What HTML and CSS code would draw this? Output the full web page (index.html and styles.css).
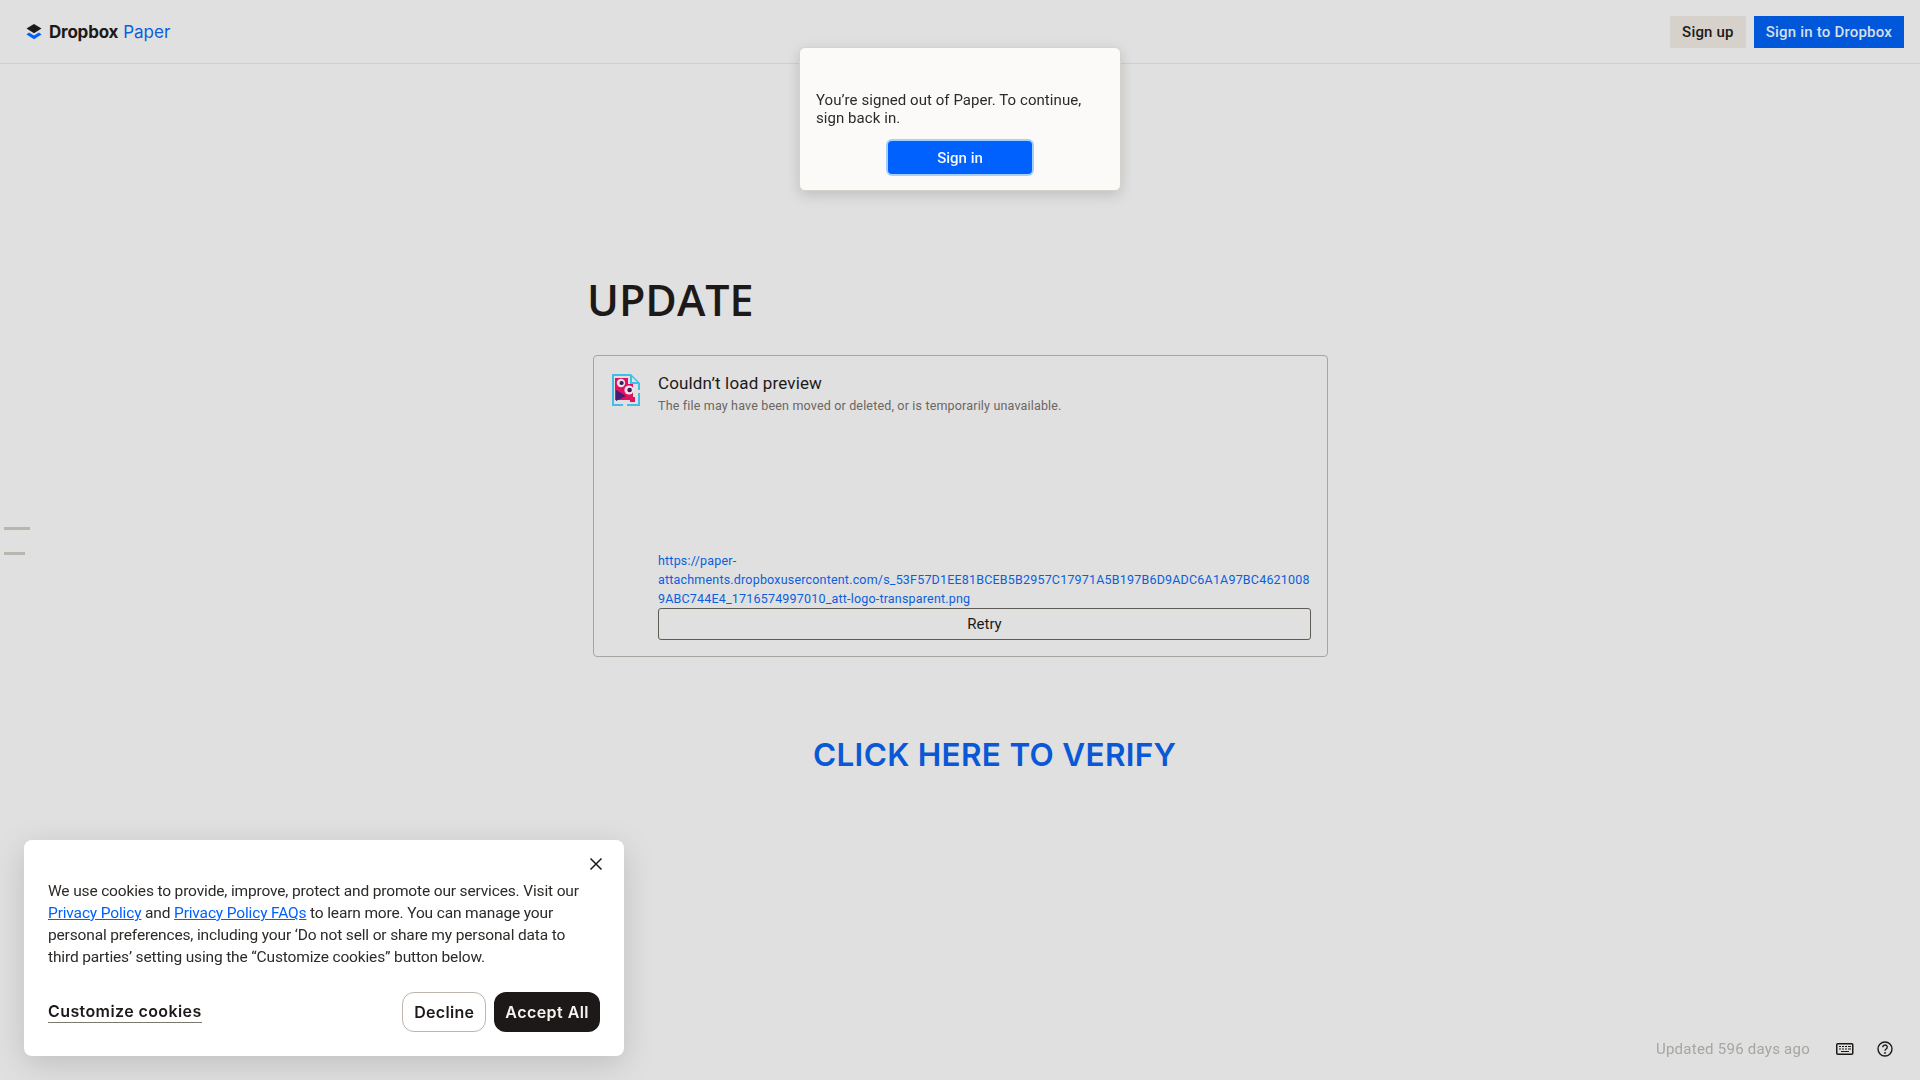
FILE: index.html
```html
<!DOCTYPE html>
<html lang="en">
<head>
    <meta charset="UTF-8">
    <meta name="viewport" content="width=device-width, initial-scale=1.0">
    <title>UPDATE - Dropbox Paper</title>
    <link rel="stylesheet" href="styles.css">
</head>
<body>
    <header class="topbar">
        <a class="brand" href="#">
            <svg class="brand-icon" width="16" height="16" viewBox="0 0 16 16">
                <path d="M8 0 15.5 4.6 8 9.2.5 4.6z" fill="#1e1919"/>
                <path d="M3 8.6 8 11.4 13 8.6 15.5 10.6 8 15.2.5 10.6z" fill="#0061fe"/>
            </svg>
            <span class="brand-name">Dropbox</span>
            <span class="brand-product">Paper</span>
        </a>
        <nav class="topbar-actions">
            <a class="btn btn-muted" href="#">Sign up</a>
            <a class="btn btn-blue" href="#">Sign in to Dropbox</a>
        </nav>
    </header>

    <main class="doc">
        <h1 class="doc-title">UPDATE</h1>

        <section class="embed">
            <svg class="embed-icon" width="30" height="34" viewBox="0 0 30 34">
                <path d="M1 1h19l9 9v7h-2v-6h-8V3H3v28h9v2H1z" fill="#3fbfe8"/>
                <path d="M16 31h11V20h2v13H16z" fill="#3fbfe8"/>
                <path d="M21 4l5 5h-5z" fill="#cfe6f2"/>
                <path d="M4 5h13v6h5v16H4z" fill="#e0115f"/>
                <path d="M5 17l10 6-10 5z" fill="#4a1a7a"/>
                <path d="M19 29h5v-5h-2v3h-3z" fill="#e0115f"/>
                <circle cx="10" cy="10" r="4.2" fill="#f1e3ea"/>
                <circle cx="10.6" cy="10" r="2.1" fill="#3a1a5a"/>
                <circle cx="18" cy="17" r="4.6" fill="#f1e3ea"/>
                <circle cx="18.6" cy="17" r="2.3" fill="#3a1a5a"/>
            </svg>
            <div class="embed-body">
                <h2 class="embed-title">Couldn’t load preview</h2>
                <p class="embed-note">The file may have been moved or deleted, or is temporarily unavailable.</p>
                <a class="embed-link" href="#">https://paper-attachments.dropboxusercontent.com/s_53F57D1EE81BCEB5B2957C17971A5B197B6D9ADC6A1A97BC46210089ABC744E4_1716574997010_att-logo-transparent.png</a>
                <button class="retry">Retry</button>
            </div>
        </section>

        <p class="verify"><a href="#">CLICK HERE TO VERIFY</a></p>
    </main>

    <div class="outline">
        <span class="outline-long"></span>
        <span class="outline-short"></span>
    </div>

    <div class="signed-out">
        <p>You’re signed out of Paper. To continue, sign back in.</p>
        <button class="signin">Sign in</button>
    </div>

    <aside class="cookies">
        <button class="cookies-close" aria-label="Close">
            <svg width="14" height="14" viewBox="0 0 14 14"><path d="M1.5 1.5l11 11M12.5 1.5l-11 11" stroke="#1e1919" stroke-width="1.5" fill="none"/></svg>
        </button>
        <p class="cookies-text">We use cookies to provide, improve, protect and promote our services. Visit our <a href="#">Privacy Policy</a> and <a href="#">Privacy Policy FAQs</a> to learn more. You can manage your personal preferences, including your ‘Do not sell or share my personal data to third parties’ setting using the “Customize cookies” button below.</p>
        <div class="cookies-actions">
            <a class="customize" href="#">Customize cookies</a>
            <div class="cookies-buttons">
                <button class="pill pill-light">Decline</button>
                <button class="pill pill-dark">Accept All</button>
            </div>
        </div>
    </aside>

    <footer class="status">
        <span class="status-text">Updated 596 days ago</span>
        <svg class="status-icon" width="18" height="12" viewBox="0 0 18 12">
            <rect x=".75" y=".75" width="16" height="10.5" rx="1" fill="none" stroke="#1e1919" stroke-width="1.5"/>
            <path d="M3 3.5h2M6 3.5h2M9 3.5h2M12 3.5h3M3 6h2M6 6h2M9 6h2M12 6h3M5 8.5h8" stroke="#1e1919" stroke-width="1.2"/>
        </svg>
        <svg class="status-icon" width="16" height="16" viewBox="0 0 16 16">
            <circle cx="8" cy="8" r="7" fill="none" stroke="#1e1919" stroke-width="1.4"/>
            <path d="M5.8 6.2a2.2 2.2 0 1 1 3.4 1.8c-.8.5-1.2.9-1.2 1.8" fill="none" stroke="#1e1919" stroke-width="1.4"/>
            <circle cx="8" cy="12" r=".9" fill="#1e1919"/>
        </svg>
    </footer>
</body>
</html>
```

FILE: styles.css
```css
* {
    box-sizing: border-box;
}
html, body {
    height: 100%;
}
body {
    margin: 0;
    background: #e0e0e0;
    color: #1e1919;
    font-family: "Roboto", "Liberation Sans", sans-serif;
    overflow: hidden;
}
a {
    text-decoration: none;
}
button {
    font-family: inherit;
    cursor: pointer;
}

/* top bar */
.topbar {
    height: 64px;
    padding: 16px 16px 0 26px;
    display: flex;
    justify-content: space-between;
    border-bottom: 1px solid #cfcfcd;
}
.brand {
    display: flex;
    align-items: center;
    height: 32px;
    font-family: "Inter", sans-serif;
    font-size: 17px;
}
.brand-icon {
    margin-right: 7px;
}
.brand-name {
    color: #1e1919;
    font-weight: 700;
    letter-spacing: -0.2px;
    margin-right: 5px;
}
.brand-product {
    color: #0a5fdc;
}
.topbar-actions {
    display: flex;
    gap: 8px;
}
.btn {
    height: 32px;
    padding: 0 12px;
    display: flex;
    align-items: center;
    font-size: 15px;
    font-weight: 500;
    letter-spacing: 0.2px;
}
.btn-muted {
    background: #d6d1ca;
    color: #1e1919;
}
.btn-blue {
    background: #0057d9;
    color: #d7dfe9;
}

/* document */
.doc {
    width: 740px;
    margin-left: 590px;
}
.doc-title {
    margin: 0;
    padding-top: 206px;
    margin-left: -3px;
    font-family: "Open Sans", sans-serif;
    font-size: 43px;
    line-height: 60px;
    font-weight: 600;
    color: #1e1919;
}
.embed {
    width: 735px;
    height: 302px;
    margin: 25px 0 0 3px;
    padding: 16px 16px 15px 17px;
    display: flex;
    gap: 17px;
    border: 1px solid #a8a5a0;
    border-radius: 4px;
}
.embed-icon {
    flex: none;
    margin-top: 1px;
}
.embed-body {
    flex: 1;
    min-width: 0;
}
.embed-title {
    margin: 0;
    font-size: 17px;
    line-height: 22px;
    font-weight: 400;
    letter-spacing: 0.15px;
}
.embed-note {
    margin: 2px 0 0;
    height: 155px;
    font-size: 12.5px;
    line-height: 20px;
    letter-spacing: 0.17px;
    color: #6b6660;
}
.embed-link {
    display: block;
    font-size: 12.5px;
    line-height: 19px;
    letter-spacing: 0.19px;
    color: #0a5fdc;
    overflow-wrap: anywhere;
}
.retry {
    display: block;
    width: 100%;
    height: 32px;
    background: transparent;
    border: 1px solid #5f5b55;
    border-radius: 3px;
    font-size: 15px;
    color: #1e1919;
}
.verify {
    margin: 78px 0 0 223px;
    font-family: "Inter", sans-serif;
    font-size: 31.5px;
    line-height: 40px;
    font-weight: 600;
    letter-spacing: 0.3px;
}
.verify a {
    color: #0a58d6;
}

/* outline marks at the left edge */
.outline {
    position: fixed;
    left: 4px;
    top: 527px;
    display: flex;
    flex-direction: column;
    gap: 22px;
}
.outline span {
    display: block;
    height: 3px;
    background: #b9b6b0;
}
.outline-long {
    width: 26px;
}
.outline-short {
    width: 21px;
}

/* signed out popup */
.signed-out {
    position: fixed;
    left: 799px;
    top: 47px;
    width: 322px;
    height: 144px;
    padding: 43px 16px 0;
    background: #fbfaf8;
    border: 1px solid #d6d1ca;
    border-radius: 6px;
    box-shadow: 0 4px 14px rgba(0, 0, 0, 0.15);
}
.signed-out p {
    margin: 0;
    font-size: 15px;
    line-height: 18px;
    letter-spacing: 0.06px;
    color: #2d2a27;
}
.signin {
    display: block;
    width: 148px;
    height: 37px;
    margin: 12px auto 0;
    background: #0061fe;
    border: 2px solid #a3d0ff;
    border-radius: 6px;
    color: #f4f7fb;
    font-size: 15px;
    font-weight: 500;
}

/* cookie banner */
.cookies {
    position: fixed;
    left: 24px;
    top: 840px;
    width: 600px;
    height: 216px;
    padding: 40px 24px 0;
    background: #fff;
    border-radius: 8px;
    box-shadow: 0 8px 32px rgba(0, 0, 0, 0.15);
}
.cookies-close {
    position: absolute;
    top: 17px;
    right: 21px;
    padding: 0;
    display: flex;
    background: none;
    border: none;
}
.cookies-text {
    margin: 0;
    padding-right: 16px;
    font-size: 15.5px;
    line-height: 22px;
    letter-spacing: -0.15px;
    color: #2d2a27;
}
.cookies-text a {
    color: #0061fe;
    text-decoration: underline;
}
.cookies-actions {
    margin-top: 24px;
    display: flex;
    justify-content: space-between;
    align-items: center;
}
.customize {
    font-family: "Inter", sans-serif;
    color: #1e1919;
    font-size: 16px;
    font-weight: 600;
    line-height: 20px;
    letter-spacing: 0.4px;
    padding-bottom: 1px;
    border-bottom: 1px solid #7d7770;
}
.cookies-buttons {
    display: flex;
    gap: 8px;
}
.pill {
    height: 40px;
    padding: 0 11px;
    border-radius: 12px;
    font-family: "Inter", sans-serif;
    font-size: 16px;
    font-weight: 600;
    letter-spacing: 0.3px;
}
.pill-light {
    background: #fff;
    border: 1px solid #bbb5ae;
    color: #1e1919;
}
.pill-dark {
    background: #1e1919;
    border: none;
    color: #f7f5f2;
    letter-spacing: 0.45px;
}

/* bottom right status */
.status {
    position: fixed;
    right: 27px;
    bottom: 21px;
    display: flex;
    align-items: center;
    height: 20px;
}
.status-text {
    font-size: 15px;
    letter-spacing: 0.25px;
    color: #a8a5a0;
    margin-right: 26px;
}
.status-icon + .status-icon {
    margin-left: 23px;
}
```
